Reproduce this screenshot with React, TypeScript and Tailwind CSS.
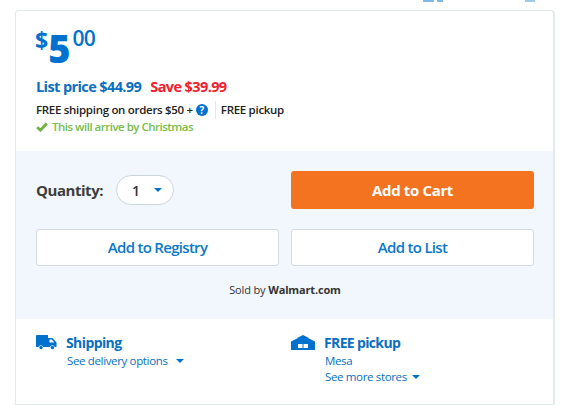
import React from 'react';

function Caret({ className }: { className: string }) {
  return (
    <svg viewBox="0 0 8 4" className={className} aria-hidden="true">
      <path d="M0 0h8L4 4z" fill="#0071ce" />
    </svg>
  );
}

function TruckIcon() {
  return (
    <svg viewBox="0 0 21 15" className="h-[15px] w-[21px] shrink-0" aria-hidden="true">
      <path
        fill="#0071ce"
        fillRule="evenodd"
        d="M1 0h11v3h4.500L20.500 7.500V12h-1.700a2.500 2.500 0 0 0-4.800 0H7.300a2.500 2.500 0 0 0-4.800 0H0V1a1 1 0 0 1 1-1zM13.500 4.500V7.500H18.300L15.800 4.500z"
      />
      <circle cx="5" cy="12.500" r="1.700" fill="#0071ce" />
      <circle cx="16.400" cy="12.500" r="1.700" fill="#0071ce" />
    </svg>
  );
}

function StoreIcon() {
  return (
    <svg viewBox="0 0 24 15" className="h-[15px] w-[24px] shrink-0" aria-hidden="true">
      <path fill="#0071ce" d="M12 0l6 3h-1l7 3.500V15H0V6.500L7 3H6z" />
      <rect x="7" y="9" width="4.500" height="4" fill="#fff" />
      <rect x="12.500" y="9" width="4.500" height="4" fill="#fff" />
    </svg>
  );
}

export default function App() {
  return (
    <div className="relative h-[406px] w-[565px] overflow-hidden bg-white font-['Open_Sans',sans-serif]">
      {/* bits of the row above, cut off by the top of the page */}
      <div className="flex h-[10px] items-start pl-[423px]">
        <div className="h-[2px] w-[11px] bg-[#7db8e8]" />
        <div className="ml-[3px] h-[2px] w-[6px] bg-[#7db8e8]" />
        <div className="ml-[82px] mt-0 h-[2px] w-[10px] bg-[#9ccbef]" />
      </div>

      <div className="ml-[15px] w-[540px] rounded-t-[4px] border border-r-2 border-[#dfeae9]">
        <div className="h-[140px] pl-5 pr-[19px] pt-[16px]">
          <div className="flex h-[45px] items-start text-[#0071ce]">
            <span className="-ml-px mt-[1px] text-[23px] font-bold leading-[24px]">$</span>
            <span className="mt-[-1px] text-[38px] font-extrabold leading-[44px] tracking-[-1px]">5</span>
            <span className="ml-[3px] mt-[-1px] text-[21px] font-semibold leading-[24px] tracking-[-0.6px]">00</span>
          </div>
          <div className="mt-[5px] flex h-[20px] items-center text-[14.500px] font-bold tracking-[-0.6px]">
            <span className="text-[#0a6fc0]">List price $44.99</span>
            <span className="ml-[9px] text-[#f2202e]">Save $39.99</span>
          </div>
          <div className="mt-[3px] flex h-[20px] items-center text-[11.500px] font-semibold tracking-[-0.3px] text-[#222]">
            <span>FREE shipping on orders $50 +</span>
            <span className="ml-[3px] flex h-[12px] w-[12px] items-center justify-center rounded-full bg-[#0071ce] text-[10px] font-bold text-white">
              ?
            </span>
            <div className="ml-[7px] mr-[5px] h-[18px] w-px bg-[#e3e8ec]" />
            <span>FREE pickup</span>
          </div>
          <div className="mt-[-2px] flex h-[17px] items-center text-[11.500px] font-semibold tracking-[-0.5px] text-[#76bd4a]">
            <svg viewBox="0 0 12 10" className="mr-[4px] h-[10px] w-[12px]" aria-hidden="true">
              <path d="M1.200 5.200l3.200 3L10.800 1.500" fill="none" stroke="#6cb33f" strokeWidth="2.800" />
            </svg>
            <span>This will arrive by Christmas</span>
          </div>
        </div>

        <div className="h-[168px] bg-[#f2f7fd] pl-5 pr-[19px] pt-[20px]">
          <div className="grid grid-cols-2 gap-x-3">
            <div className="flex h-[38px] items-center">
              <span className="text-[15px] font-bold tracking-[-0.45px] text-[#3d3d3d]">Quantity:</span>
              <div className="ml-[13px] flex h-[30px] w-[58px] items-center rounded-full border border-[#ccd6df] bg-white pl-[15px] text-[14px] font-semibold text-[#333]">
                1
                <Caret className="ml-[14px] h-[4px] w-[8px]" />
              </div>
            </div>
            <button className="flex h-[38px] items-center justify-center rounded-[3px] bg-[#f47321] text-[15px] font-bold tracking-[-0.35px] text-white">
              Add to Cart
            </button>
          </div>
          <div className="mt-[20px] grid grid-cols-2 gap-x-3">
            <button className="flex h-[37px] items-center justify-center rounded-[3px] border border-[#d3dae0] bg-white text-[15px] font-semibold tracking-[-0.7px] text-[#0b79ca]">
              Add to Registry
            </button>
            <button className="flex h-[37px] items-center justify-center rounded-[3px] border border-[#d3dae0] bg-white text-[15px] font-semibold tracking-[-0.7px] text-[#0b79ca]">
              Add to List
            </button>
          </div>
          <div className="mt-[16px] text-center text-[11px] leading-[16px] tracking-[-0.15px] text-[#333]">
            Sold by <span className="font-bold">Walmart.com</span>
          </div>
        </div>

        <div className="grid h-[85px] grid-cols-2 gap-x-3 pl-5 pr-[19px] pt-[16px]">
          <div className="flex">
            <TruckIcon />
            <div className="ml-[9px]">
              <div className="text-[14px] font-bold leading-[16px] tracking-[-0.6px] text-[#0a6fc0]">Shipping</div>
              <div className="mt-[2px] flex items-center pl-px text-[11.500px] leading-[16px] tracking-[-0.35px] text-[#0a6fc0]">
                See delivery options
                <Caret className="ml-[8px] h-[4px] w-[8px]" />
              </div>
            </div>
          </div>
          <div className="flex">
            <StoreIcon />
            <div className="ml-[9px]">
              <div className="text-[14px] font-bold leading-[16px] tracking-[-0.65px] text-[#0a6fc0]">FREE pickup</div>
              <div className="mt-[2px] pl-px text-[11.500px] leading-[16px] tracking-[-0.35px] text-[#0a6fc0]">Mesa</div>
              <div className="flex items-center pl-px text-[11.500px] leading-[16px] tracking-[-0.35px] text-[#0a6fc0]">
                See more stores
                <Caret className="ml-[5px] h-[4px] w-[8px]" />
              </div>
            </div>
          </div>
        </div>
      </div>
    </div>
  );
}
